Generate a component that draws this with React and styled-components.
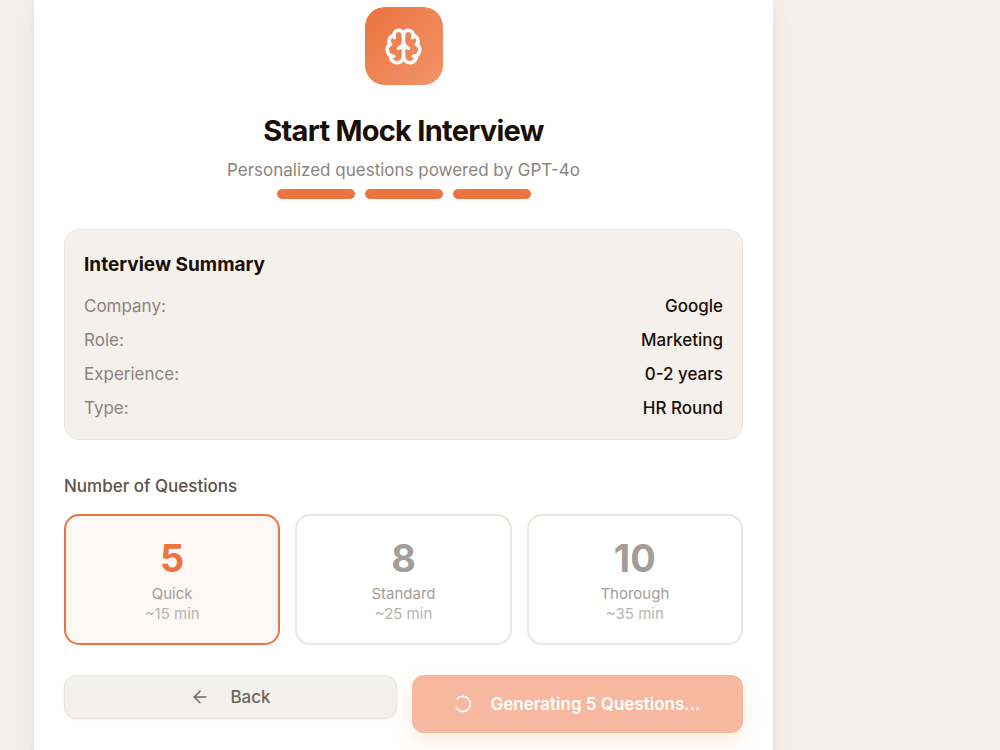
import { useState } from "react";
import styled, { createGlobalStyle } from "styled-components";
import { ArrowLeft, Brain } from "lucide-react";

const GlobalStyle = createGlobalStyle`
  *,
  *::before,
  *::after {
    box-sizing: border-box;
  }

  body {
    margin: 0;
    background: #f4f0eb;
    color: #1a0e05;
    font-family: Inter, "Liberation Sans", sans-serif;
    font-size: 17px;
    line-height: 24px;
  }

  h1,
  h2,
  p,
  dl,
  dd {
    margin: 0;
  }

  button {
    font: inherit;
  }
`;

const Page = styled.main`
  padding: 0 34px;
  overflow: hidden;
`;

const Card = styled.section`
  max-width: 739px;
  min-height: 100vh;
  padding: 7px 30px 30px;
  background: #fff;
  box-shadow: 0 6px 24px rgba(60, 40, 20, 0.06), 0 0 6px rgba(60, 40, 20, 0.04);
`;

const Header = styled.header`
  display: flex;
  flex-direction: column;
  align-items: center;
  text-align: center;
`;

const Logo = styled.div`
  display: flex;
  align-items: center;
  justify-content: center;
  width: 78px;
  height: 78px;
  border-radius: 20px;
  background: linear-gradient(135deg, #ea7341, #f29468);
  color: #fff;
`;

const Title = styled.h1`
  margin-top: 27px;
  font-size: 29px;
  font-weight: 700;
  line-height: 38px;
  letter-spacing: -0.025em;
`;

const Subtitle = styled.p`
  margin-top: 8px;
  color: #8b847e;
`;

const Steps = styled.div`
  display: flex;
  gap: 10px;
  margin-top: 7px;
`;

const Step = styled.span`
  width: 78px;
  height: 10px;
  border-radius: 5px;
  background: #ed7440;
`;

const Summary = styled.section`
  margin-top: 30px;
  padding: 20px 19px 19px;
  border: 1px solid #ece6dd;
  border-radius: 15px;
  background: #f4f0eb;
`;

const SummaryTitle = styled.h2`
  font-size: 19px;
  font-weight: 700;
  line-height: 30px;
`;

const SummaryList = styled.dl`
  display: grid;
  gap: 10px;
  margin-top: 14px;
`;

const SummaryRow = styled.div`
  display: flex;
  justify-content: space-between;
`;

const Term = styled.dt`
  color: #8b847e;
`;

const Detail = styled.dd`
  font-weight: 500;
`;

const GroupLabel = styled.p`
  margin-top: 34px;
  color: #5c534b;
  font-weight: 500;
`;

const Options = styled.div`
  display: grid;
  grid-template-columns: repeat(3, 1fr);
  gap: 15px;
  margin-top: 16px;
`;

const Option = styled.button`
  display: flex;
  flex-direction: column;
  align-items: center;
  padding: 20px 20px 19px;
  border: 2px solid ${(props) => (props.$active ? "#ed7440" : "#ece6dd")};
  border-radius: 15px;
  background: ${(props) => (props.$active ? "#fef8f4" : "#fff")};
  color: ${(props) => (props.$active ? "#ed7440" : "#a39d98")};
`;

const Count = styled.span`
  font-size: 38px;
  font-weight: 700;
  line-height: 44px;
`;

const Pace = styled.span`
  margin-top: 4px;
  color: #a39d98;
  font-size: 15px;
  line-height: 20px;
`;

const Duration = styled.span`
  color: #b8b4b0;
  font-size: 15px;
  line-height: 20px;
`;

const Actions = styled.div`
  display: flex;
  align-items: flex-start;
  gap: 15px;
  margin-top: 30px;
`;

const ActionButton = styled.button`
  display: flex;
  flex: 1;
  align-items: center;
  justify-content: center;
  border-radius: 12px;
`;

const BackButton = styled(ActionButton)`
  gap: 20px;
  padding: 9px 20px;
  border: 1px solid #e9e5de;
  background: #f3f1ee;
  box-shadow: 0 1px 2px rgba(60, 40, 20, 0.06);
  color: #6f655d;
  font-weight: 500;
`;

const SubmitButton = styled(ActionButton)`
  gap: 18px;
  padding: 17px 20px;
  border: 0;
  background: #f6b89f;
  box-shadow: 0 8px 20px rgba(240, 150, 50, 0.18);
  color: #fff;
  font-weight: 600;
`;

const Spinner = styled.svg`
  width: 18px;
  height: 18px;
  fill: none;
  stroke: currentColor;
  stroke-width: 1.6;
`;

const summary = [
  { term: "Company:", detail: "Google" },
  { term: "Role:", detail: "Marketing" },
  { term: "Experience:", detail: "0-2 years" },
  { term: "Type:", detail: "HR Round" },
];

const options = [
  { count: 5, pace: "Quick", duration: "~15 min" },
  { count: 8, pace: "Standard", duration: "~25 min" },
  { count: 10, pace: "Thorough", duration: "~35 min" },
];

const App = () => {
  const [count, setCount] = useState(5);

  return (
    <>
      <GlobalStyle />
      <Page>
        <Card>
          <Header>
            <Logo>
              <Brain size={39} strokeWidth={2.2} />
            </Logo>
            <Title>Start Mock Interview</Title>
            <Subtitle>Personalized questions powered by GPT-4o</Subtitle>
            <Steps>
              <Step />
              <Step />
              <Step />
            </Steps>
          </Header>

          <Summary>
            <SummaryTitle>Interview Summary</SummaryTitle>
            <SummaryList>
              {summary.map(({ term, detail }) => (
                <SummaryRow key={term}>
                  <Term>{term}</Term>
                  <Detail>{detail}</Detail>
                </SummaryRow>
              ))}
            </SummaryList>
          </Summary>

          <GroupLabel id="count-label">Number of Questions</GroupLabel>
          <Options role="group" aria-labelledby="count-label">
            {options.map((option) => (
              <Option
                key={option.count}
                type="button"
                $active={option.count === count}
                aria-pressed={option.count === count}
                onClick={() => setCount(option.count)}
              >
                <Count>{option.count}</Count>
                <Pace>{option.pace}</Pace>
                <Duration>{option.duration}</Duration>
              </Option>
            ))}
          </Options>

          <Actions>
            <BackButton type="button">
              <ArrowLeft size={20} strokeWidth={1.8} />
              Back
            </BackButton>
            <SubmitButton type="button" disabled>
              <Spinner viewBox="0 0 18 18" aria-hidden="true">
                <path d="M2.6 4.6A7.5 7.5 0 1 1 2 12.2" />
              </Spinner>
              Generating {count} Questions...
            </SubmitButton>
          </Actions>
        </Card>
      </Page>
    </>
  );
};

export default App;
